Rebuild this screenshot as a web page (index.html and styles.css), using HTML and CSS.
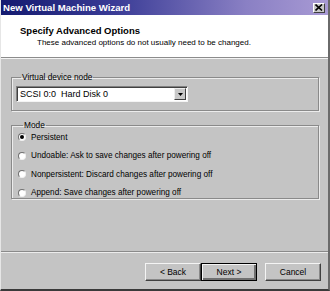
FILE: index.html
```html
<!DOCTYPE html>
<html>
<head>
<meta charset="utf-8">
<link rel="stylesheet" href="styles.css">
</head>
<body>
<div class="window">
  <div class="titlebar">
    <span class="title">New Virtual Machine Wizard</span>
    <span class="close"><svg width="8" height="7" viewBox="0 0 8 7"><path d="M0.5 0.5 L7 6.5 M7 0.5 L0.5 6.5" stroke="#000" stroke-width="1.6"/></svg></span>
  </div>
  <div class="header">
    <div class="h-title">Specify Advanced Options</div>
    <div class="h-sub">These advanced options do not usually need to be changed.</div>
  </div>
  <div class="content">
    <fieldset class="group g1">
      <legend>Virtual device node</legend>
      <div class="select">
        <span class="sel-text">SCSI 0:0&nbsp;&nbsp;Hard Disk 0</span>
        <span class="sel-btn"><svg width="5" height="3" viewBox="0 0 5 3"><path d="M0 0 H5 L2.5 3 Z" fill="#000"/></svg></span>
      </div>
    </fieldset>
    <fieldset class="group g2">
      <legend>Mode</legend>
      <div class="radio"><span class="rb checked"></span><span>Persistent</span></div>
      <div class="radio"><span class="rb"></span><span>Undoable: Ask to save changes after powering off</span></div>
      <div class="radio"><span class="rb"></span><span>Nonpersistent: Discard changes after powering off</span></div>
      <div class="radio"><span class="rb"></span><span>Append: Save changes after powering off</span></div>
    </fieldset>
  </div>
  <div class="footer">
    <div class="buttons">
      <div class="btn">&lt; Back</div>
      <div class="btn default">Next &gt;</div>
      <div class="btn cancel">Cancel</div>
    </div>
  </div>
</div>
</body>
</html>
```

FILE: styles.css
```css
html, body {
  margin: 0;
  padding: 0;
  background: #c4c4c4;
}
body {
  font-family: "Liberation Sans", Arial, sans-serif;
  font-size: 8px;
  color: #000;
}
.window {
  width: 330px;
  height: 291px;
  box-sizing: border-box;
  background: #c4c4c4;
  border-right: 2px solid #6a6a6a;
  border-bottom: 2px solid #3a3a3a;
  border-left: 1px solid #e6e6e6;
  display: flex;
  flex-direction: column;
}
.titlebar {
  height: 15px;
  background: linear-gradient(to right, #141a70 0%, #3a3c96 35%, #8a80c4 75%, #a89ad4 100%);
  display: flex;
  align-items: center;
  justify-content: space-between;
  padding: 0 3px 0 2px;
}
.title {
  color: #fff;
  font-weight: bold;
  font-size: 9.6px;
}
.close {
  width: 12px;
  height: 10px;
  background: #c8c8c8;
  box-sizing: border-box;
  border: 1px solid;
  border-color: #fff #404040 #404040 #fff;
  display: flex;
  align-items: center;
  justify-content: center;
}
.header {
  background: #fff;
  height: 43px;
  box-sizing: border-box;
  padding: 10px 0 0 19px;
  border-bottom: 1px solid #8c8c8c;
  box-shadow: 0 1px 0 #f4f4f4;
}
.h-title {
  font-weight: bold;
  font-size: 9.5px;
  line-height: 11px;
}
.h-sub {
  padding-left: 17px;
  line-height: 11px;
  margin-top: 1px;
  font-size: 8px;
}
.content {
  padding: 15px 9px 0 10px;
  display: flex;
  flex-direction: column;
  gap: 10px;
}
.group {
  margin: 0;
  padding: 0;
  border: 1px solid #8a8a8a;
  box-shadow: 1px 1px 0 #ececec, inset 1px 1px 0 #ececec;
  min-width: 0;
}
.group legend {
  padding: 0 1px;
  margin-left: 5px;
  line-height: 9px;
  font-size: 8.3px;
}
.g1 {
  height: 32px;
  padding: 4px 0 0 4px;
}
.select {
  width: 172px;
  height: 16px;
  box-sizing: border-box;
  background: #fff;
  border: 1px solid;
  border-color: #808080 #f4f4f4 #f4f4f4 #808080;
  box-shadow: inset 1px 1px 0 #404040;
  display: flex;
  align-items: center;
  justify-content: space-between;
  padding: 0 1px 0 3px;
}
.sel-text {
  font-size: 9px;
}
.sel-btn {
  width: 12px;
  height: 12px;
  box-sizing: border-box;
  background: #c8c8c8;
  border: 1px solid;
  border-color: #eee #404040 #404040 #eee;
  display: flex;
  align-items: center;
  justify-content: center;
}
.g2 {
  height: 74px;
  padding: 2px 0 0 6px;
  display: flex;
  flex-direction: column;
  gap: 8.6px;
}
.radio {
  display: flex;
  align-items: center;
  gap: 5px;
  height: 10px;
  font-size: 8.2px;
}
.rb {
  width: 8px;
  height: 8px;
  box-sizing: border-box;
  border-radius: 50%;
  background: #fff;
  border: 1px solid;
  border-color: #707070 #f0f0f0 #f0f0f0 #707070;
  display: flex;
  align-items: center;
  justify-content: center;
}
.rb.checked::after {
  content: "";
  width: 4px;
  height: 4px;
  border-radius: 50%;
  background: #000;
}
.footer {
  margin-top: auto;
  border-top: 1px solid #8a8a8a;
  box-shadow: inset 0 1px 0 #ececec;
  height: 38px;
  box-sizing: border-box;
  padding: 11px 7px 0 0;
}
.buttons {
  display: flex;
  justify-content: flex-end;
}
.btn {
  width: 56px;
  height: 18px;
  box-sizing: border-box;
  border: 1px solid;
  border-color: #f4f4f4 #404040 #404040 #f4f4f4;
  box-shadow: inset -1px -1px 0 #888;
  display: flex;
  align-items: center;
  justify-content: center;
  font-size: 8.5px;
}
.btn.default {
  border: 1px solid #000;
  box-shadow: inset 1px 1px 0 #f4f4f4, inset -2px -2px 0 #707070;
}
.btn.cancel {
  margin-left: 8px;
}
```
